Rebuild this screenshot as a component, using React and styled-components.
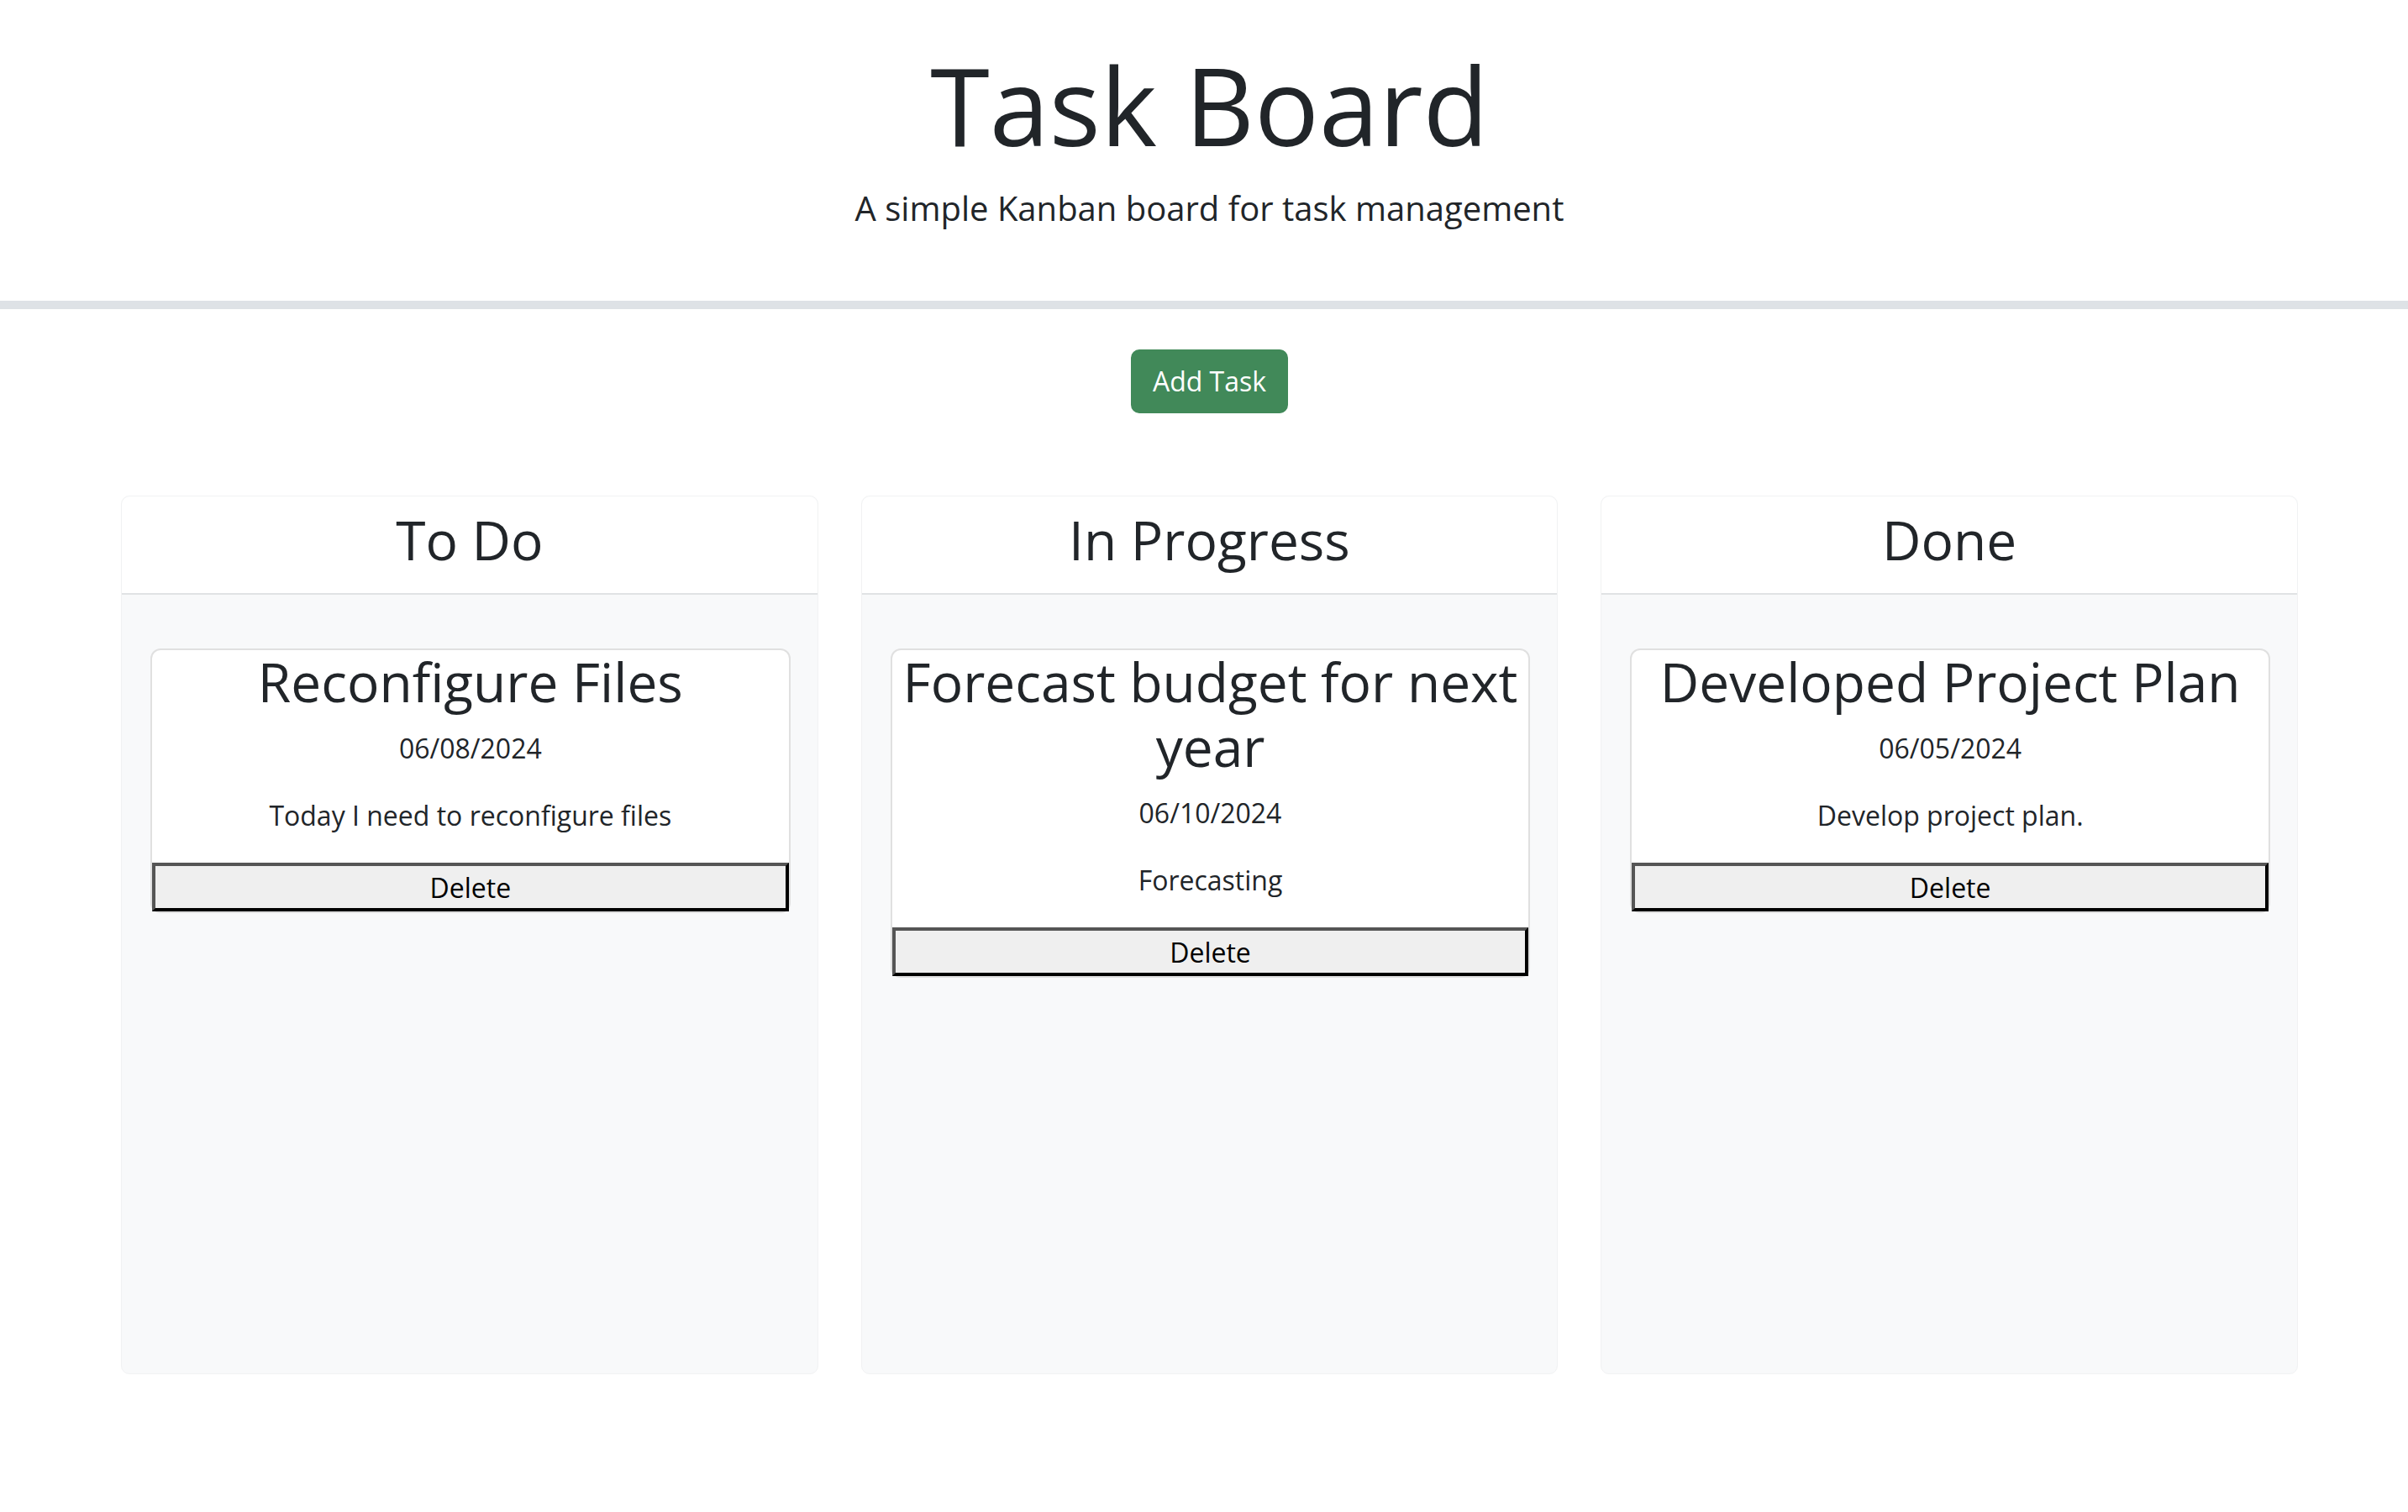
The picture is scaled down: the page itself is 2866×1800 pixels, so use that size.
import React from 'react';
import styled, { createGlobalStyle } from 'styled-components';

const GlobalStyle = createGlobalStyle`
  * {
    box-sizing: border-box;
  }

  body {
    margin: 0;
    background: #ffffff;
    color: #212529;
    font-family: "Open Sans", "Noto Sans", sans-serif;
  }
`;

const Page = styled.div`
  min-height: 1800px;
`;

const Header = styled.header`
  text-align: center;
  padding: 48px 0 48px 13px;
  border-bottom: 10px solid #dee2e6;
`;

const Title = styled.h1`
  margin: 0 0 16px;
  font-size: 128px;
  font-weight: 400;
  line-height: 1.2;
`;

const Lead = styled.p`
  margin: 0 0 32px;
  font-size: 40px;
  font-weight: 400;
  line-height: 1.5;
`;

const Toolbar = styled.div`
  display: flex;
  justify-content: center;
  padding: 48px 0 0 13px;
`;

const AddButton = styled.button`
  font-family: inherit;
  font-size: 32px;
  line-height: 48px;
  padding: 12px 24px;
  color: #ffffff;
  background: #418959;
  border: 2px solid #418959;
  border-radius: 10px;
  cursor: pointer;
`;

const Board = styled.main`
  display: grid;
  grid-template-columns: repeat(3, 1fr);
  gap: 51px;
  padding: 0 131px 0 144px;
  margin-top: 98px;
`;

const Column = styled.section`
  background: #f8f9fa;
  border: 1px solid #f1f2f3;
  border-radius: 10px;
  min-height: 1046px;
`;

const ColumnHeader = styled.div`
  background: #ffffff;
  border-bottom: 2px solid #e0e2e4;
  border-radius: 10px 10px 0 0;
  text-align: center;
  padding: 14px 0 25px;
`;

const ColumnTitle = styled.h2`
  margin: 0;
  font-size: 64px;
  font-weight: 500;
  line-height: 1.2;
`;

const ColumnBody = styled.div`
  padding: 64px 32px 32px 34px;
`;

const Card = styled.article`
  background: #ffffff;
  border: 2px solid #e0e0e0;
  border-radius: 12px;
  text-align: center;
`;

const CardTitle = styled.h3`
  margin: 0 0 16px;
  padding: 0 8px;
  font-size: 64px;
  font-weight: 500;
  line-height: 1.2;
`;

const CardLine = styled.p`
  margin: 0 0 32px;
  font-size: 32px;
  line-height: 1.5;
`;

const DeleteButton = styled.button`
  display: block;
  width: 100%;
  font-family: inherit;
  font-size: 32px;
  line-height: 48px;
  padding: 2px 12px 0;
  color: #000000;
  background: #efefef;
  border-width: 4px;
  border-style: solid;
  border-color: #555555 #000000 #000000 #555555;
  cursor: pointer;
`;

const columns = [
  {
    title: 'To Do',
    tasks: [
      {
        title: 'Reconfigure Files',
        date: '06/08/2024',
        text: 'Today I need to reconfigure files',
      },
    ],
  },
  {
    title: 'In Progress',
    tasks: [
      {
        title: 'Forecast budget for next year',
        date: '06/10/2024',
        text: 'Forecasting',
      },
    ],
  },
  {
    title: 'Done',
    tasks: [
      {
        title: 'Developed Project Plan',
        date: '06/05/2024',
        text: 'Develop project plan.',
      },
    ],
  },
];

export default () => {
  return (
    <Page>
      <GlobalStyle />
      <Header>
        <Title>Task Board</Title>
        <Lead>A simple Kanban board for task management</Lead>
      </Header>
      <Toolbar>
        <AddButton type="button">Add Task</AddButton>
      </Toolbar>
      <Board>
        {columns.map(column => {
          return (
            <Column key={column.title}>
              <ColumnHeader>
                <ColumnTitle>{column.title}</ColumnTitle>
              </ColumnHeader>
              <ColumnBody>
                {column.tasks.map(task => {
                  return (
                    <Card key={task.title}>
                      <CardTitle>{task.title}</CardTitle>
                      <CardLine>{task.date}</CardLine>
                      <CardLine>{task.text}</CardLine>
                      <DeleteButton type="button">Delete</DeleteButton>
                    </Card>
                  );
                })}
              </ColumnBody>
            </Column>
          );
        })}
      </Board>
    </Page>
  );
};
